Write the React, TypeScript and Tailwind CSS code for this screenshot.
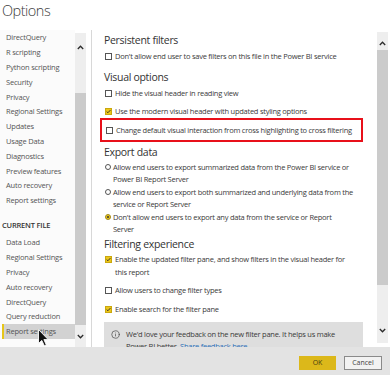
import { Info } from 'lucide-react'

const general = [
  'DirectQuery',
  'R scripting',
  'Python scripting',
  'Security',
  'Privacy',
  'Regional Settings',
  'Updates',
  'Usage Data',
  'Diagnostics',
  'Preview features',
  'Auto recovery',
  'Report settings',
]

const currentFile = [
  'Data Load',
  'Regional Settings',
  'Privacy',
  'Auto recovery',
  'DirectQuery',
  'Query reduction',
  'Report settings',
]

function Chevron({ up }: { up?: boolean }) {
  return (
    <svg width="7" height="5" viewBox="0 0 7 5">
      <polyline
        points={up ? '0.8,4 3.5,1.2 6.2,4' : '0.8,1 3.5,3.8 6.2,1'}
        fill="none"
        stroke="#2b2b2b"
        strokeWidth="1.3"
      />
    </svg>
  )
}

function Checkbox({ checked }: { checked?: boolean }) {
  return (
    <span
      className={`mt-[2.5px] flex h-[7px] w-[7px] shrink-0 items-center justify-center border ${
        checked ? 'border-[#c9a70e] bg-[#ecc61a]' : 'border-[#555] bg-white'
      }`}
    >
      {checked && (
        <svg width="6" height="5" viewBox="0 0 6 5">
          <polyline points="0.8,2.6 2.3,4 5.3,0.8" fill="none" stroke="#2a2a2a" strokeWidth="1.1" />
        </svg>
      )}
    </span>
  )
}

function Radio({ selected }: { selected?: boolean }) {
  return (
    <span
      className={`mt-[3px] flex h-[6px] w-[6px] shrink-0 items-center justify-center rounded-full border ${
        selected ? 'border-[#a08a20] bg-[#ecc61a]' : 'border-[#555] bg-white'
      }`}
    >
      {selected && <span className="h-[2px] w-[2px] rounded-full bg-[#333]" />}
    </span>
  )
}

function CheckRow({ checked, children, className = '' }: { checked?: boolean; children: React.ReactNode; className?: string }) {
  return (
    <div className={`flex items-start gap-[3px] pl-[1px] text-[7.5px] leading-[12px] tracking-[-0.25px] text-[#3a3a3a] ${className}`}>
      <Checkbox checked={checked} />
      <span>{children}</span>
    </div>
  )
}

function RadioRow({ selected, children }: { selected?: boolean; children: React.ReactNode }) {
  return (
    <div className="mt-[1px] flex h-[24px] items-start gap-[2px] pl-[1px] text-[7.5px] leading-[12px] tracking-[-0.25px] text-[#3a3a3a]">
      <Radio selected={selected} />
      <span>{children}</span>
    </div>
  )
}

function Heading({ children, className = '' }: { children: React.ReactNode; className?: string }) {
  return (
    <div className={`h-[16px] text-[10.5px] leading-[16px] tracking-[-0.3px] text-[#333] ${className}`}>
      {children}
    </div>
  )
}

export default function App() {
  return (
    <div className="relative flex h-[375px] w-[390px] flex-col overflow-hidden bg-white font-['Open_Sans','Noto_Sans',sans-serif]">
      {/* Title */}
      <div className="h-[30px] pl-[2px] pt-[1px] text-[14.5px] font-light leading-[20px] tracking-[-0.5px] text-[#3b3b3b]">
        Options
      </div>

      <div className="flex h-[317px]">
        {/* Left nav */}
        <nav className="w-[75px] bg-[#fbfbfb] pt-[0.6px] text-[7.5px] tracking-[-0.2px] text-[#555]">
          {general.map((item) => (
            <div key={'g' + item} className="flex h-[14.8px] items-center pl-[6px]">
              {item}
            </div>
          ))}
          <div className="h-[27.4px] pl-[2px] pt-[11px] font-semibold leading-[12px] text-[#333]">CURRENT FILE</div>
          {currentFile.map((item, i) =>
            i === currentFile.length - 1 ? (
              <div key={'c' + item} className="ml-[2px] flex h-[14.8px] items-center border-l-2 border-[#e6c619] bg-[#d2d2d2] pl-[2px]">
                {item}
              </div>
            ) : (
              <div key={'c' + item} className="flex h-[14.8px] items-center pl-[6px]">
                {item}
              </div>
            )
          )}
        </nav>

        {/* Left nav scrollbar */}
        <div className="mt-[3px] flex h-[314px] w-[11px] flex-col bg-[#eeeeee]">
          <div className="flex h-[28px] items-center justify-center">
            <Chevron up />
          </div>
          <div className="h-[32px]" />
          <div className="h-[232px] bg-[#cbcbcb]" />
          <div className="flex flex-1 items-center justify-center">
            <Chevron />
          </div>
        </div>

        <div className="w-[5px]" />
        <div className="w-px bg-[#d8d8d8]" />

        {/* Content panel */}
        <div className="flex flex-1 bg-white">
          <div className="w-[285px] overflow-hidden pl-[12px]">
            <Heading className="mt-[2px]">Persistent filters</Heading>
            <CheckRow className="mt-[2px] h-[12px]">Don't allow end user to save filters on this file in the Power BI service</CheckRow>

            <Heading className="mt-[7px]">Visual options</Heading>
            <CheckRow className="mt-[2px] h-[12px]">Hide the visual header in reading view</CheckRow>
            <CheckRow checked className="mt-[6px] h-[12px]">Use the modern visual header with updated styling options</CheckRow>
            <div className="ml-[-4px] mt-[1px] flex h-[24px] w-[263px] items-center border-2 border-[#e8101a] pl-[3px]">
              <CheckRow className="pl-0">Change default visual interaction from cross highlighting to cross filtering</CheckRow>
            </div>

            <Heading className="mt-[2px]">Export data</Heading>
            <RadioRow>
              Allow end users to export summarized data from the Power BI service or
              <br />
              Power BI Report Server
            </RadioRow>
            <RadioRow>
              Allow end users to export both summarized and underlying data from the
              <br />
              service or Report Server
            </RadioRow>
            <RadioRow selected>
              Don't allow end users to export any data from the service or Report
              <br />
              Server
            </RadioRow>

            <Heading className="mt-[1px]">Filtering experience</Heading>
            <CheckRow checked className="mt-[1px] h-[26px] leading-[13px]">
              Enable the updated filter pane, and show filters in the visual header for
              <br />
              this report
            </CheckRow>
            <CheckRow className="mt-[5px] h-[12px]">Allow users to change filter types</CheckRow>
            <CheckRow checked className="mt-[7px] h-[12px]">Enable search for the filter pane</CheckRow>

            <div className="mt-[7px] flex h-[40px] w-[259px] gap-[6px] bg-[#dedede] pl-[7px] pt-[6px] text-[7.5px] leading-[12px] tracking-[-0.25px] text-[#3a3a3a]">
              <Info className="mt-[2px] h-[9px] w-[9px] shrink-0 text-[#444]" strokeWidth={1.8} />
              <span>
                We'd love your feedback on the new filter pane. It helps us make
                <br />
                Power BI better. <span className="text-[#2a6fb8]">Share feedback here</span>
              </span>
            </div>
          </div>

          {/* Content scrollbar */}
          <div className="mt-[2px] flex h-[311px] w-[11px] flex-col bg-[#eeeeee]">
            <div className="flex h-[18px] items-center justify-center pt-[4px]">
              <Chevron up />
            </div>
            <div className="h-[235px] bg-[#cbcbcb]" />
            <div className="flex flex-1 items-end justify-center pb-[10px]">
              <Chevron />
            </div>
          </div>
          <div className="w-[2px]" />
        </div>
      </div>

      {/* Footer */}
      <div className="flex flex-1 items-start justify-end gap-[8px] bg-[#e3e3e3] pr-[8px] pt-[9px]">
        <button className="flex h-[14px] w-[37px] items-center justify-center bg-[#dcb81a] text-[7px] text-[#4a3f10]">
          OK
        </button>
        <button className="flex h-[14px] w-[38px] items-center justify-center border border-[#8a8a8a] bg-[#f2f2f2] text-[7px] text-[#444]">
          Cancel
        </button>
      </div>

      {/* Mouse cursor */}
      <svg className="absolute left-[38px] top-[329px]" width="11" height="18" viewBox="0 0 11 18">
        <path d="M0.5 0.5 L0.5 14.5 L3.8 11.4 L6.3 16.8 L8.3 15.9 L5.9 10.6 L10.2 10.6 Z" fill="#111" stroke="#fff" strokeWidth="0.9" />
      </svg>
    </div>
  )
}
